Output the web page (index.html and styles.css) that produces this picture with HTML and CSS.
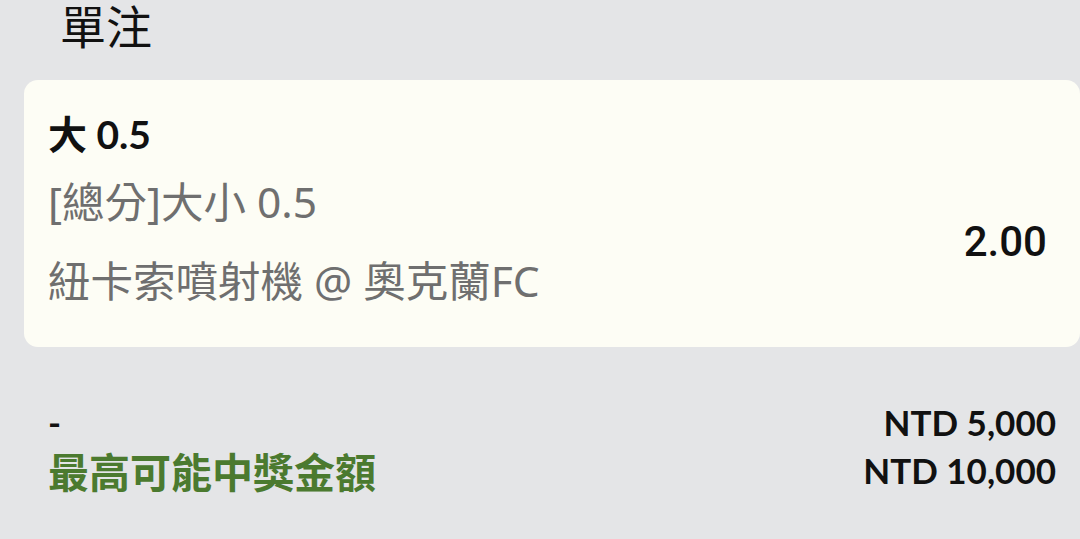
FILE: index.html
```html
<!DOCTYPE html>
<html lang="zh-Hant">
<head>
<meta charset="utf-8">
<link rel="stylesheet" href="styles.css">
</head>
<body>
<div class="page">
  <div class="title">單注</div>
  <div class="card">
    <div class="sel">大 0.5</div>
    <div class="detail">
      <div class="lines">
        <div class="gray">[總分]大小 0.5</div>
        <div class="gray">紐卡索噴射機 @ 奧克蘭FC</div>
      </div>
      <div class="odds">2.00</div>
    </div>
  </div>
  <div class="summary">
    <div class="row">
      <span class="dash">-</span>
      <span class="amt">NTD 5,000</span>
    </div>
    <div class="row">
      <span class="win">最高可能中獎金額</span>
      <span class="amt">NTD 10,000</span>
    </div>
  </div>
</div>
</body>
</html>
```

FILE: styles.css
```css
html, body {
  margin: 0;
  padding: 0;
  background: #e4e5e7;
}
body {
  width: 1080px;
  height: 539px;
  overflow: hidden;
  font-family: "Noto Sans CJK TC", "Noto Sans", sans-serif;
}
.page {
  display: flex;
  flex-direction: column;
}
.title {
  padding-left: 60px;
  font-size: 46px;
  line-height: 48px;
  height: 48px;
  color: #111;
}
.card {
  margin-top: 32px;
  margin-left: 24px;
  background: #fdfdf5;
  border-radius: 14px;
  padding: 30px 33px 27px 24px;
  display: flex;
  flex-direction: column;
}
.sel {
  font-family: Lato, "Noto Sans CJK TC", sans-serif;
  font-weight: 700;
  font-size: 39px;
  line-height: 48px;
  color: #111;
}
.detail {
  margin-top: 4px;
  display: flex;
  align-items: center;
  justify-content: space-between;
}
.gray {
  font-family: "Noto Sans", "Noto Sans CJK TC", sans-serif;
  font-size: 42.5px;
  line-height: 79px;
  color: #6f6f6f;
}
.odds {
  font-family: Roboto, sans-serif;
  font-weight: 500;
  font-size: 42px;
  color: #111;
}
.summary {
  margin-top: 51px;
  padding: 0 24px 0 48px;
  display: flex;
  flex-direction: column;
}
.row {
  display: flex;
  justify-content: space-between;
  align-items: center;
  height: 48px;
}
.dash, .amt {
  font-family: Lato, sans-serif;
  font-weight: 700;
  font-size: 35px;
  color: #111;
}
.win {
  font-weight: 700;
  font-size: 41px;
  color: #4b7a2f;
}
```
